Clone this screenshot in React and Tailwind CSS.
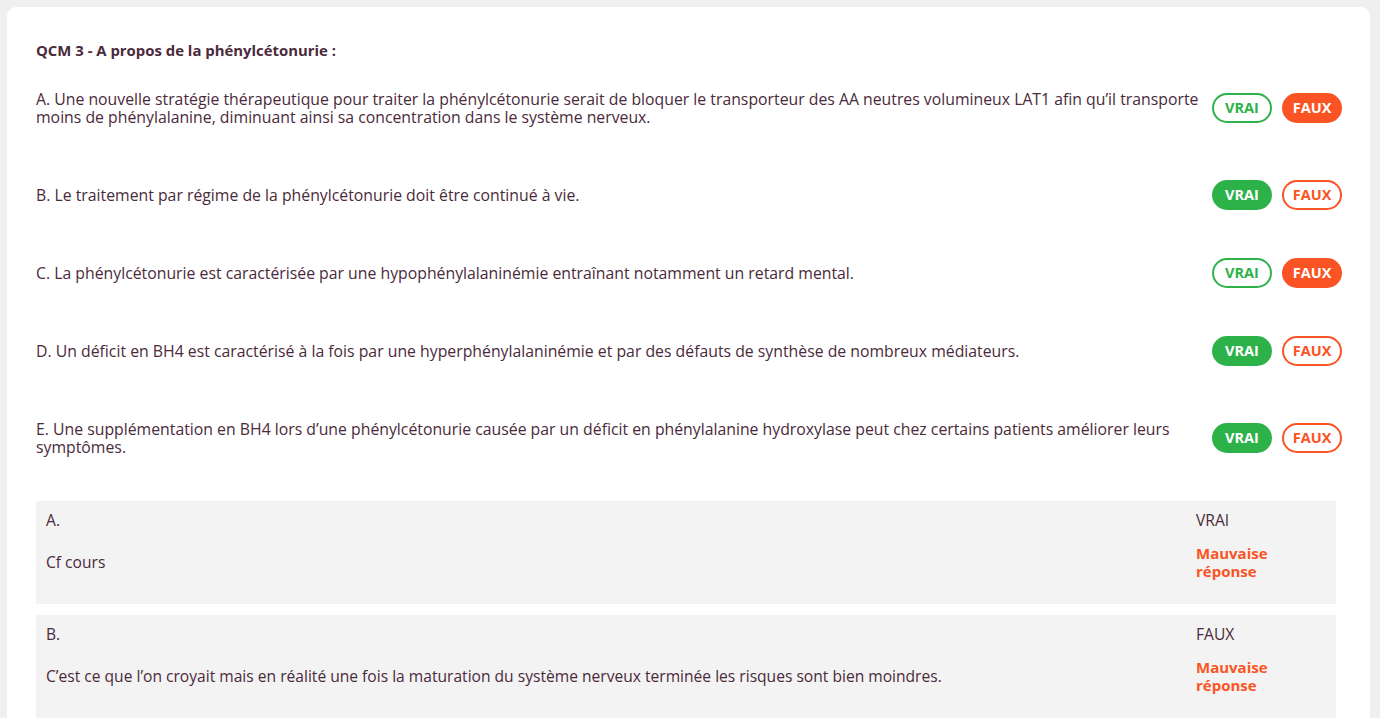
const QUESTIONS = [
  {
    id: 'A',
    text: "A. Une nouvelle stratégie thérapeutique pour traiter la phénylcétonurie serait de bloquer le transporteur des AA neutres volumineux LAT1 afin qu’il transporte moins de phénylalanine, diminuant ainsi sa concentration dans le système nerveux.",
    answer: 'FAUX',
  },
  { id: 'B', text: 'B. Le traitement par régime de la phénylcétonurie doit être continué à vie.', answer: 'VRAI' },
  { id: 'C', text: 'C. La phénylcétonurie est caractérisée par une hypophénylalaninémie entraînant notamment un retard mental.', answer: 'FAUX' },
  { id: 'D', text: 'D. Un déficit en BH4 est caractérisé à la fois par une hyperphénylalaninémie et par des défauts de synthèse de nombreux médiateurs.', answer: 'VRAI' },
  {
    id: 'E',
    text: 'E. Une supplémentation en BH4 lors d’une phénylcétonurie causée par un déficit en phénylalanine hydroxylase peut chez certains patients améliorer leurs symptômes.',
    answer: 'VRAI',
  },
];

const CORRECTIONS = [
  { id: 'A', comment: 'Cf cours', truth: 'VRAI' },
  {
    id: 'B',
    comment: 'C’est ce que l’on croyait mais en réalité une fois la maturation du système nerveux terminée les risques sont bien moindres.',
    truth: 'FAUX',
  },
];

function Choice({ label, selected, color }) {
  const cls =
    color === 'green'
      ? selected
        ? 'bg-[#2db24a] border-[#2db24a] text-white'
        : 'bg-white border-[#2db24a] text-[#2db24a]'
      : selected
        ? 'bg-[#fa5424] border-[#fa5424] text-white'
        : 'bg-white border-[#fa5424] text-[#fa5424]';
  return (
    <button className={`w-[60px] h-[30px] rounded-full border-2 text-[14.5px] font-bold leading-none ${cls}`}>
      {label}
    </button>
  );
}

export default function App() {
  return (
    <div className="min-h-screen bg-[#efefef] pt-[7px] px-[7px] text-[#4a2a3b]" style={{ fontFamily: '"Open Sans", Lato, sans-serif' }}>
      <div className="bg-white rounded-t-[9px] w-[1363px] pl-[29px] pr-[28px] pt-[33px] pb-8">
        {/* Title */}
        <h2 className="text-[14.9px] font-bold leading-[20px]">QCM 3 - A propos de la phénylcétonurie :</h2>

        {/* Questions */}
        <div className="mt-[24px] flex flex-col gap-[48px]">
          {QUESTIONS.map(q => (
            <div key={q.id} className="flex items-center">
              <p className="flex-1 pr-[12px] py-[6px] text-[15.8px] leading-[18px]">{q.text}</p>
              <div className="flex gap-[10px]">
                <Choice label="VRAI" color="green" selected={q.answer === 'VRAI'} />
                <Choice label="FAUX" color="orange" selected={q.answer === 'FAUX'} />
              </div>
            </div>
          ))}
        </div>

        {/* Corrections */}
        <div className="mt-[39px] w-[1300px] flex flex-col gap-[11px]">
          {CORRECTIONS.map(c => (
            <div key={c.id} className="bg-[#f3f3f3] flex pl-[10px] pr-[20px] pt-[10px] pb-[24px] text-[15.6px] leading-[18px]">
              <div className="flex-1">
                <p>{c.id}.</p>
                <p className="mt-6">{c.comment}</p>
              </div>
              <div className="w-[120px]">
                <p>{c.truth}</p>
                <p className="mt-[15px] w-[100px] text-[15px] font-bold text-[#fa5424]">Mauvaise réponse</p>
              </div>
            </div>
          ))}
        </div>
      </div>
    </div>
  );
}
